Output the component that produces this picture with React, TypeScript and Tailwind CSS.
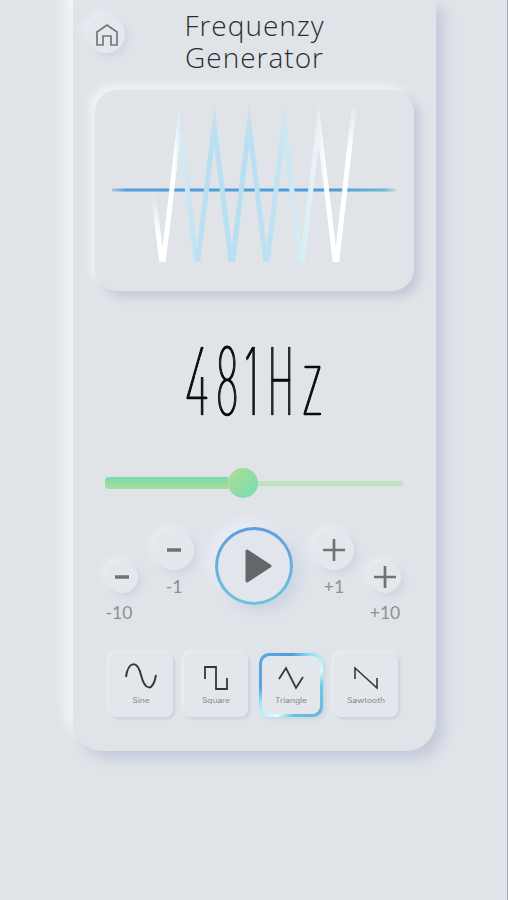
import React from "react";

const raised =
  "rounded-full bg-[#e4e8ed] shadow-[4px_4px_7px_#cfd5e3,-4px_-4px_7px_#e9edf3] flex items-center justify-center shrink-0";

function Glyph({ ch, box, shape }: { ch: string; box: string; shape: string }) {
  return (
    <span className={`block h-[72px] ${box}`}>
      <span
        className={`-mt-[11px] block w-max origin-[0_81px] font-['Inter',sans-serif] text-[94px] font-thin leading-none text-[#090b0d] [-webkit-text-stroke:0.7px_#090b0d] [text-shadow:-1.8px_0_0_#090b0d,1.8px_0_0_#090b0d] ${shape}`}
      >
        {ch}
      </span>
    </span>
  );
}

function Step({ label, plus = false, large = false }: { label: string; plus?: boolean; large?: boolean }) {
  return (
    <div className={`flex w-12 flex-col items-center ${large ? "pt-[3px]" : "pt-[34px]"}`}>
      <div className={`${raised} ${large ? "size-10" : "size-8"}`}>
        <svg width="24" height="24" viewBox="0 0 24 24" stroke="#707276" strokeWidth={plus ? 2.7 : 3.5}>
          <path d={plus ? "M1 12H23M12 1V23" : "M5 12H19"} />
        </svg>
      </div>
      <span
        className={`${large ? "mt-[5px]" : "mt-[8px]"} ${label === "-10" ? "mr-[6px]" : ""} whitespace-nowrap font-['Lato',sans-serif] text-[17.5px] leading-6 text-[#8c8f94]`}
      >
        {label}
      </span>
    </div>
  );
}

function WaveButton({ label, d, width, textWidth }: { label: string; d: string; width: number; textWidth: number }) {
  const active = label === "Triangle";
  return (
    <button
      className={
        active
          ? "h-[64px] w-[64px] rounded-[10px] bg-[conic-gradient(from_0deg,#4d9bd8_0deg,#8fdcf5_32deg,#d9fbff_65deg,#69cce9_90deg,#65b9da_135deg,#61c3df_175deg,#e1fdff_205deg,#a7eefa_235deg,#59a2e2_265deg,#5ba8e7_315deg,#4d9bd8_360deg)] p-[3px] shadow-[2px_2px_4px_#cbd2df]"
          : "h-[64px] w-[64px] rounded-[8px] shadow-[2px_2px_3px_#c7cfdf,-2px_-2px_3px_#ebeff4]"
      }
    >
      <span className={`flex h-full w-full flex-col items-center rounded-[8px] bg-[#e3e7ec] ${active ? "pt-[4px]" : "pt-[7px]"}`}>
        <svg width="36" height="34" viewBox="0 0 36 34" fill="none" stroke="#35383b" strokeWidth={width}>
          <path d={d} />
        </svg>
        <svg width="56" height="11" className="mt-[1px] block">
          <text
            x="28"
            y="8"
            textAnchor="middle"
            textLength={textWidth}
            lengthAdjust="spacingAndGlyphs"
            className="font-['Inter',sans-serif] text-[7px]"
            fill="#85898e"
          >
            {label}
          </text>
        </svg>
      </span>
    </button>
  );
}

export default function App() {
  return (
    <main className="h-[900px] w-[508px] overflow-hidden border-r border-[#a6a4ad] bg-[#e0e4e9] pl-[73px]">
      <section className="h-[751px] w-[363px] rounded-b-[30px] bg-[#e0e4e9] shadow-[8px_8px_14px_#c3cad9,-8px_-10px_12px_#f3f7f9]">
        <header className="flex h-[90px] items-start">
          <div className={`${raised} ml-[14px] mt-[15px] size-[38px]`}>
            <svg width="24" height="24" viewBox="0 0 24 24" fill="none" stroke="#737579" strokeWidth="1.7" className="ml-px mt-px">
              <path d="M2 22V9L12 2L22 9V22H16V13H8V22Z" />
            </svg>
          </div>
          <h1 className="ml-[42px] mt-[9px] w-[175px] text-center font-['Open_Sans',sans-serif] text-[28px] font-light leading-[32px] tracking-[1px] text-[#2b2d31]">
            Frequenzy Generator
          </h1>
        </header>

        <div className="ml-[22px] h-[201px] w-[319px] rounded-[22px] bg-[#e0e3e8] shadow-[6px_6px_10px_#c3cad9,-5px_-5px_8px_#f0f4f8]">
          <svg width="319" height="201" viewBox="95 90 319 201" fill="none">
            <defs>
              <linearGradient id="axis" gradientUnits="userSpaceOnUse" x1="112" y1="0" x2="396" y2="0">
                <stop offset="0" stopColor="#509fda" stopOpacity=".4" />
                <stop offset=".05" stopColor="#509fda" />
                <stop offset=".78" stopColor="#4d9dda" />
                <stop offset=".96" stopColor="#6fb9d2" />
                <stop offset="1" stopColor="#9ed0c8" stopOpacity=".5" />
              </linearGradient>
              <linearGradient id="wave" gradientUnits="userSpaceOnUse" x1="152" y1="0" x2="356" y2="0">
                <stop offset="0" stopColor="#fff" />
                <stop offset=".11" stopColor="#fff" />
                <stop offset=".14" stopColor="#d5ecf6" />
                <stop offset=".23" stopColor="#bae0f2" />
                <stop offset=".46" stopColor="#b5dff2" />
                <stop offset=".6" stopColor="#bfe2f2" />
                <stop offset=".74" stopColor="#d9edf5" />
                <stop offset=".81" stopColor="#eaf3f8" />
                <stop offset=".86" stopColor="#fff" />
                <stop offset="1" stopColor="#fff" />
              </linearGradient>
              <linearGradient id="tips" gradientUnits="userSpaceOnUse" x1="0" y1="104" x2="0" y2="145">
                <stop offset="0" stopColor="#777" />
                <stop offset="1" stopColor="#fff" />
              </linearGradient>
              <linearGradient id="end" gradientUnits="userSpaceOnUse" x1="0" y1="106" x2="0" y2="155">
                <stop offset="0" stopColor="#222" />
                <stop offset="1" stopColor="#fff" />
              </linearGradient>
              <linearGradient id="start" gradientUnits="userSpaceOnUse" x1="0" y1="193" x2="0" y2="238">
                <stop offset="0" stopColor="#000" />
                <stop offset="1" stopColor="#fff" />
              </linearGradient>
              <mask id="fade" maskUnits="userSpaceOnUse" x="95" y="90" width="319" height="172">
                <rect x="95" y="90" width="319" height="172" fill="url(#tips)" />
                <rect x="340" y="90" width="30" height="80" fill="url(#end)" />
                <path d="M145 180H157L163 245H145Z" fill="url(#start)" />
              </mask>
            </defs>
            <path d="M112 188.5H396V191.5H112Z" fill="url(#axis)" />
            <path
              d="M153 190L162.5 268L179.5 125L197 268L214.3 125L231.8 268L249.2 125L266.6 268L284 125L301.3 268L318.6 125L336 268L354 108"
              stroke="url(#wave)"
              strokeWidth="5"
              strokeMiterlimit="20"
              mask="url(#fade)"
            />
          </svg>
        </div>

        <div className="ml-[111px] mt-[54px] flex h-[72px]">
          <Glyph
            ch="4"
            box="w-[32px] [clip-path:polygon(0_0,100%_0,100%_4px,19px_4px,11px_32px,100%_32px,100%_100%,0_100%)]"
            shape="scale-x-[0.46]"
          />
          <Glyph ch="8" box="w-[28px]" shape="scale-x-[0.4]" />
          <Glyph ch="1" box="w-[24px]" shape="scale-x-[0.42]" />
          <Glyph ch="H" box="w-[33px]" shape="scale-x-[0.37]" />
          <Glyph ch="z" box="w-[24px]" shape="scale-x-[0.46] scale-y-[0.96]" />
        </div>

        <div className="ml-[32px] mt-[51px] flex h-[30px] items-center">
          <div className="h-3 w-[123px] rounded-l-[4px] bg-linear-to-b from-[#75dcac] to-[#acdb98]" />
          <div className="size-[30px] rounded-full bg-linear-to-br from-[#b0dc91] to-[#70ddb5]" />
          <div className="h-[5px] w-[145px] rounded-r-full bg-[#bfe2c0]" />
        </div>

        <div className="ml-[23px] mt-[29px] flex h-[110px]">
          <div className="w-[54px] pl-[2px]"><Step label="-10" /></div>
          <div className="w-[65px]"><Step label="-1" large /></div>
          <div className="flex size-[78px] shrink-0 items-center justify-center rounded-full bg-linear-to-b from-[#5b9fdf] to-[#71c2dc] p-[3px] shadow-[7px_7px_13px_#cdd4e3,-7px_-7px_13px_#e9edf4]">
            <div className="flex size-full items-center justify-center rounded-full bg-[#e2e6ec] pl-2">
              <svg width="32" height="38" viewBox="0 0 32 38">
                <path d="M5 4L28 19L5 34Z" fill="#63666a" stroke="#63666a" strokeWidth="3" strokeLinejoin="round" />
              </svg>
            </div>
          </div>
          <div className="ml-[17px] w-[51px]"><Step label="+1" plus large /></div>
          <Step label="+10" plus />
        </div>

        <div className="ml-[36px] mt-[16px] flex gap-[11px]">
          <WaveButton label="Sine" width={2} textWidth={17.5} d="M3 17C5 2 14 -1 18 15C22 31 30 32 33 15" />
          <WaveButton label="Square" width={1.8} textWidth={28} d="M7 19V7H18V29H29V18" />
          <WaveButton label="Triangle" width={1.8} textWidth={32} d="M6 19L13 8L23 28L30 17" />
          <WaveButton label="Sawtooth" width={1.6} textWidth={38} d="M7 19V8L29 28V18" />
        </div>
      </section>
    </main>
  );
}
